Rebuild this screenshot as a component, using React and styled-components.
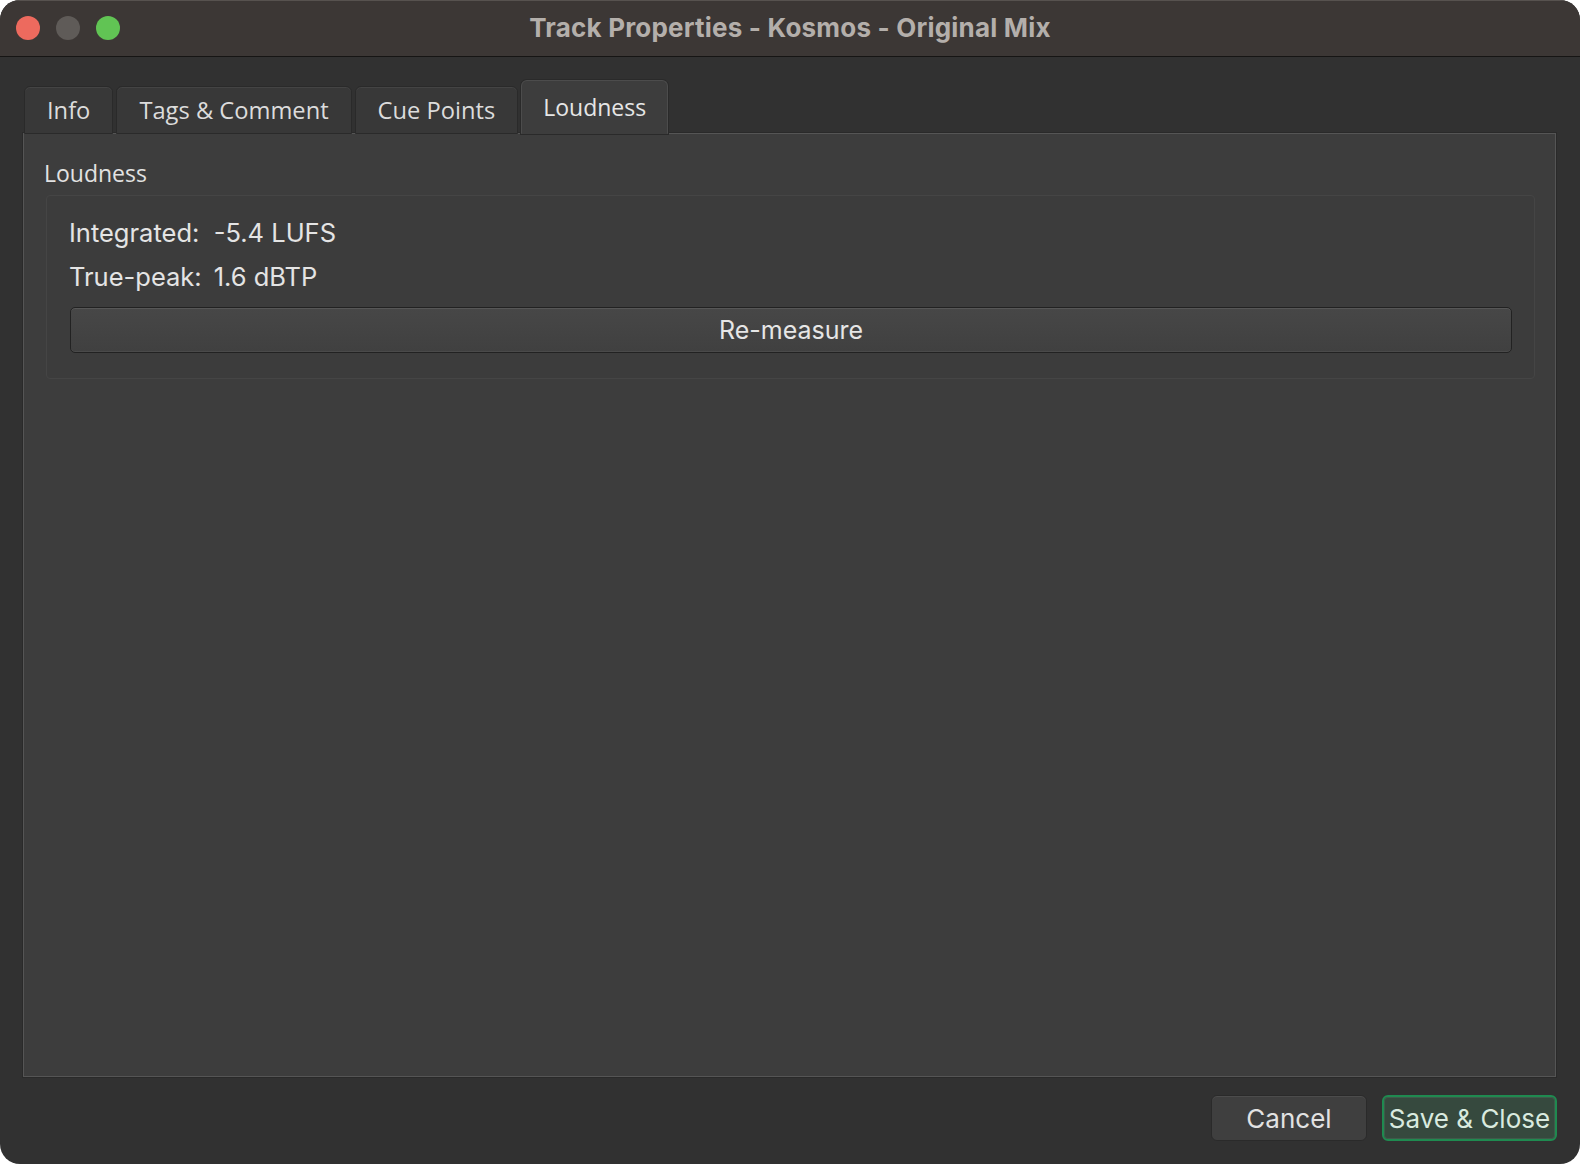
import React from "react";
import styled, { createGlobalStyle } from "styled-components";

const Global = createGlobalStyle`
  html, body { margin: 0; padding: 0; background: #ffffff; }
  #root { width: 1580px; height: 1164px; }
  * { box-sizing: border-box; }
`;

const Window = styled.div`
  width: 1580px;
  height: 1164px;
  border-radius: 20px;
  overflow: hidden;
  background: #313131;
  display: flex;
  flex-direction: column;
  font-family: Inter, "Liberation Sans", sans-serif;
`;

const TitleBar = styled.div`
  height: 57px;
  flex: none;
  background: #3c3735;
  border-top: 1px solid #57524f;
  border-bottom: 1px solid #161514;
  display: flex;
  align-items: center;
  position: relative;
`;

const Lights = styled.div`
  position: absolute;
  left: 16px;
  top: 15px;
  display: flex;
  gap: 16px;
`;

const Light = styled.span`
  width: 24px;
  height: 24px;
  border-radius: 50%;
  background: ${(p) => p.$c};
`;

const Title = styled.div`
  flex: 1;
  text-align: center;
  color: #b4afab;
  font-weight: 700;
  font-size: 26px;
  letter-spacing: 0.2px;
  margin-top: -3px;
`;

const Body = styled.div`
  flex: 1;
  display: flex;
  flex-direction: column;
  padding: 23px 24px 23px 23px;
`;

const TabBar = styled.div`
  display: flex;
  align-items: flex-end;
  gap: 3px;
  padding-left: 1px;
  position: relative;
  z-index: 1;
  margin-bottom: -1px;
`;

const Tab = styled.div`
  height: ${(p) => (p.$active ? "54px" : "48px")};
  padding: 0 ${(p) => (p.$active ? "21px" : "22px")};
  display: flex;
  align-items: center;
  padding-top: ${(p) => (p.$active ? "0" : "0")};
  font-family: "Open Sans", "Noto Sans", sans-serif;
  font-size: ${(p) => (p.$active ? "23px" : "23.7px")};
  color: ${(p) => (p.$active ? "#e6e6e6" : "#dcdcdc")};
  background: ${(p) => (p.$active ? "#3d3d3d" : "#383838")};
  border: 1px solid ${(p) => (p.$active ? "#4c4c4c" : "#2a2a2a")};
  border-bottom: ${(p) => (p.$active ? "1px solid #3d3d3d" : "1px solid #2a2a2a")};
  border-radius: 6px 6px 0 0;
  box-shadow: ${(p) =>
    p.$active ? "0 0 0 1px #2a2a2a" : "inset 0 1px 0 #444444"};
`;

const Panel = styled.div`
  flex: 1;
  background: #3d3d3d;
  border: 1px solid #555555;
  box-shadow: 0 0 0 1px #2a2a2a;
  padding: 24px 20px 0 20px;
`;

const GroupTitle = styled.div`
  font-family: "Open Sans", "Noto Sans", sans-serif;
  font-size: 23px;
  color: #e2e2e2;
  line-height: 30px;
  margin-bottom: 7px;
`;

const GroupBox = styled.div`
  margin-left: 2px;
  border: 1px solid #454545;
  border-radius: 4px;
  background: #3c3c3c;
  padding: 21px 23px 25px 22px;
`;

const Stats = styled.div`
  display: grid;
  grid-template-columns: auto 1fr;
  column-gap: 12px;
  row-gap: 12px;
  font-size: 25.5px;
  line-height: 32px;
  color: #e4e4e4;
  margin-bottom: 14px;
`;

const Button = styled.button`
  height: 46px;
  width: 100%;
  margin-left: 1px;
  font-family: Inter, "Liberation Sans", sans-serif;
  font-size: 25px;
  color: #e6e6e6;
  background: linear-gradient(#474747, #404040);
  border: 1px solid #222222;
  border-radius: 5px;
  box-shadow: inset 0 1px 0 #575757, inset 0 -1px 0 #4a4a4a;
  padding: 0;
`;

const Footer = styled.div`
  display: flex;
  justify-content: flex-end;
  gap: 15px;
  padding-top: 18px;
  margin-right: -1px;
`;

const DialogButton = styled.button`
  height: 46px;
  width: ${(p) => p.$w}px;
  font-family: Inter, "Liberation Sans", sans-serif;
  font-size: 26px;
  padding: 0;
  border-radius: 6px;
  color: ${(p) => (p.$primary ? "#d9eadf" : "#e2e2e2")};
  background: ${(p) => (p.$primary ? "#36493e" : "#3f3f3f")};
  border: ${(p) => (p.$primary ? "2px solid #1f8a50" : "1px solid #2a2a2a")};
  box-shadow: ${(p) =>
    p.$primary ? "inset 0 0 0 1px #3f5a4a" : "inset 0 1px 0 #4c4c4c"};
`;

export default function App() {
  return (
    <>
      <Global />
      <Window>
        <TitleBar>
          <Lights>
            <Light $c="#ed6a5e" />
            <Light $c="#5f5b58" />
            <Light $c="#61c454" />
          </Lights>
          <Title>Track Properties - Kosmos - Original Mix</Title>
        </TitleBar>
        <Body>
          <TabBar>
            <Tab>Info</Tab>
            <Tab>Tags &amp; Comment</Tab>
            <Tab>Cue Points</Tab>
            <Tab $active>Loudness</Tab>
          </TabBar>
          <Panel>
            <GroupTitle>Loudness</GroupTitle>
            <GroupBox>
              <Stats>
                <span>Integrated:</span>
                <span>-5.4 LUFS</span>
                <span>True-peak:</span>
                <span>1.6 dBTP</span>
              </Stats>
              <Button>Re-measure</Button>
            </GroupBox>
          </Panel>
          <Footer>
            <DialogButton $w={156}>Cancel</DialogButton>
            <DialogButton $w={175} $primary>
              Save &amp; Close
            </DialogButton>
          </Footer>
        </Body>
      </Window>
    </>
  );
}
